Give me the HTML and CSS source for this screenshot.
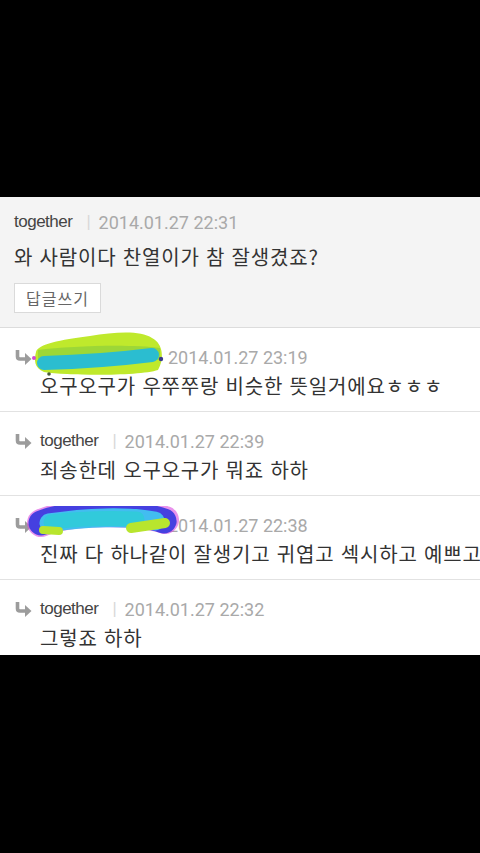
FILE: index.html
```html
<!DOCTYPE html>
<html lang="ko">
<head>
<meta charset="utf-8">
<title>댓글</title>
<link rel="stylesheet" href="styles.css">
</head>
<body>
<div class="thread">
  <div class="comment">
    <div class="meta">
      <span class="name">together</span>
      <span class="sep">|</span>
      <span class="date">2014.01.27 22:31</span>
    </div>
    <div class="text">와 사람이다 찬열이가 참 잘생겼죠?</div>
    <button class="reply-btn">답글쓰기</button>
  </div>

  <div class="reply">
    <div class="meta">
      <svg class="arrow" viewBox="0 0 18 16" width="18" height="16"><path d="M3.5 1 V7.5 Q3.5 10 6 10 H12" fill="none" stroke="#9c9c9c" stroke-width="3.6"/><polygon points="11,4 17.5,10 11,16" fill="#9c9c9c"/></svg>
      <svg class="scribble s1" viewBox="0 0 135 46" width="135" height="46">
        <path d="M6 22 C8 14 30 10 60 6 C85 2 110 0 122 8 C134 14 134 30 128 40 C110 46 40 46 14 42 C4 38 4 30 6 22 Z" fill="#bfe92c"/>
        <path d="M8 20 C40 16 100 14 130 18 L130 30 C100 28 40 30 8 32 Z" fill="#96d339" opacity="0.85"/>
        <path d="M14 33 C50 32 90 29 122 25" fill="none" stroke="#2bbdd0" stroke-width="14" stroke-linecap="round"/>
        <circle cx="4" cy="28" r="2" fill="#d14bd0"/>
        <circle cx="131" cy="29" r="2.2" fill="#3a3a8a"/>
        <circle cx="19" cy="44" r="1.8" fill="#4a5a3a"/>
      </svg>
      <span class="date">2014.01.27 23:19</span>
    </div>
    <div class="text">오구오구가 우쭈쭈랑 비슷한 뜻일거에요ㅎㅎㅎ</div>
  </div>

  <div class="reply">
    <div class="meta">
      <svg class="arrow" viewBox="0 0 18 16" width="18" height="16"><path d="M3.5 1 V7.5 Q3.5 10 6 10 H12" fill="none" stroke="#9c9c9c" stroke-width="3.6"/><polygon points="11,4 17.5,10 11,16" fill="#9c9c9c"/></svg>
      <span class="name">together</span>
      <span class="sep">|</span>
      <span class="date">2014.01.27 22:39</span>
    </div>
    <div class="text">죄송한데 오구오구가 뭐죠 하하</div>
  </div>

  <div class="reply">
    <div class="meta">
      <svg class="arrow" viewBox="0 0 18 16" width="18" height="16"><path d="M3.5 1 V7.5 Q3.5 10 6 10 H12" fill="none" stroke="#9c9c9c" stroke-width="3.6"/><polygon points="11,4 17.5,10 11,16" fill="#9c9c9c"/></svg>
      <svg class="scribble s2" viewBox="0 0 152 34" width="152" height="34">
        <path d="M14 17 C40 5 110 4 138 14" fill="none" stroke="#d84ae0" stroke-width="28" stroke-linecap="round" opacity="0.6"/>
        <path d="M14 17 C40 6 110 5 137 15" fill="none" stroke="#4540e0" stroke-width="25" stroke-linecap="round"/>
        <path d="M22 17 C60 11 100 10 128 15" fill="none" stroke="#42bdf0" stroke-width="19" stroke-linecap="round"/>
        <path d="M24 16 C55 12 85 12 110 13" fill="none" stroke="#31cadb" stroke-width="15" stroke-linecap="round"/>
        <path d="M16 24 L32 25" fill="none" stroke="#b8e52e" stroke-width="8" stroke-linecap="round"/>
        <path d="M104 22 L138 17" fill="none" stroke="#b8e52e" stroke-width="10" stroke-linecap="round"/>
      </svg>
      <span class="date d-under">2014.01.27 22:38</span>
    </div>
    <div class="text">진짜 다 하나같이 잘생기고 귀엽고 섹시하고 예쁘고</div>
  </div>

  <div class="reply">
    <div class="meta">
      <svg class="arrow" viewBox="0 0 18 16" width="18" height="16"><path d="M3.5 1 V7.5 Q3.5 10 6 10 H12" fill="none" stroke="#9c9c9c" stroke-width="3.6"/><polygon points="11,4 17.5,10 11,16" fill="#9c9c9c"/></svg>
      <span class="name">together</span>
      <span class="sep">|</span>
      <span class="date">2014.01.27 22:32</span>
    </div>
    <div class="text">그렇죠 하하</div>
  </div>
</div>
</body>
</html>
```
FILE: styles.css
```css
html, body {
  margin: 0;
  padding: 0;
  background: #000;
}
body {
  width: 480px;
  height: 853px;
  overflow: hidden;
}
.thread {
  margin-top: 197px;
  height: 458px;
  background: #fff;
  overflow: hidden;
  white-space: nowrap;
}
.comment {
  background: #f4f4f4;
  padding: 13px 14px 14px;
  border-bottom: 1px solid #dcdcdc;
}
.reply {
  padding: 17px 0 12px 14px;
  border-bottom: 1px solid #e2e2e2;
}
.meta {
  display: flex;
  align-items: center;
  height: 24px;
}
.name {
  font-family: "Liberation Sans", Arial, sans-serif;
  font-size: 17px;
  letter-spacing: -0.5px;
  color: #444;
}
.sep {
  font-family: "Liberation Sans", Arial, sans-serif;
  font-size: 16px;
  color: #d8d8d8;
  margin: 0 8px 0 14px;
}
.date {
  font-family: Roboto, "Liberation Sans", sans-serif;
  font-size: 18px;
  color: #a9a9a9;
}
.text {
  font-family: "Noto Sans CJK KR", sans-serif;
  font-size: 20px;
  letter-spacing: 0.8px;
  line-height: 26px;
  color: #333;
  margin-top: 10px;
}
.reply .text {
  margin-top: 4px;
  margin-left: 26px;
}
.reply-btn {
  display: block;
  margin-top: 13px;
  height: 30px;
  padding: 0 11px;
  box-sizing: border-box;
  background: #fff;
  border: 1px solid #dadada;
  font-family: "Noto Sans CJK KR", sans-serif;
  font-size: 16px;
  letter-spacing: 1px;
  color: #666;
}
.arrow {
  flex: none;
  margin-right: 8px;
}
.scribble {
  flex: none;
  position: relative;
  z-index: 1;
}
.s1 {
  margin: -15px 3px -7px -10px;
}
.s2 {
  margin: -7px 0 -3px -13px;
}
.d-under {
  margin-left: -11px;
}
```
